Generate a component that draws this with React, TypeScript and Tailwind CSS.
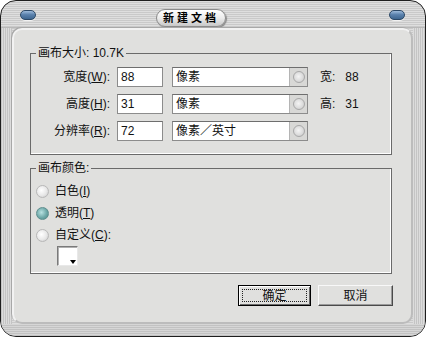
import type { ReactNode } from 'react';

const rows = [
  { label: '宽度', key: 'W', value: '88', unit: '像素', info: '宽:', infoVal: '88' },
  { label: '高度', key: 'H', value: '31', unit: '像素', info: '高:', infoVal: '31' },
  { label: '分辨率', key: 'R', value: '72', unit: '像素／英寸', info: '', infoVal: '' },
];

function Oval() {
  return (
    <div className="w-[16px] h-[10px] rounded-full border border-[#2c4866] bg-[linear-gradient(180deg,#9fbcdc_0%,#5b82ad_45%,#3e6690_100%)] shadow-[0_1px_0_#f2f2f2]" />
  );
}

function SelectBox({ text }: { text: string }) {
  return (
    <div className="ml-[9px] flex h-[20px] w-[136px] border border-[#8c8c8c] border-t-[#6e6e6e] bg-white">
      <div className="flex flex-1 items-center pl-[3px] text-[12px] text-[#111]">{text}</div>
      <div className="flex w-[18px] items-center justify-center border-l border-[#b4b4b4] bg-[#d8d8d6]">
        <div className="h-[12px] w-[12px] rounded-full border border-[#a8a8a8] bg-[radial-gradient(circle_at_45%_45%,#f4f4f4_0%,#dcdcdc_55%,#c4c4c4_100%)]" />
      </div>
    </div>
  );
}

function Radio({ checked, children }: { checked?: boolean; children: ReactNode }) {
  return (
    <div className="ml-[5px] flex h-[22px] items-center gap-[6px]">
      {checked ? (
        <div className="h-[13px] w-[13px] rounded-full border border-[#5e8e8e] bg-[radial-gradient(circle_at_40%_40%,#b8e2e2_0%,#6fa9a9_55%,#4a8585_100%)]" />
      ) : (
        <div className="h-[13px] w-[13px] rounded-full border border-[#b8b8b8] bg-[radial-gradient(circle_at_40%_40%,#ffffff_0%,#e8e8e8_55%,#c4c4c4_100%)]" />
      )}
      <span className="text-[12px] text-[#111]">{children}</span>
    </div>
  );
}

export default function App() {
  return (
    <div className="h-[337px] w-[426px] overflow-hidden rounded-[16px] border border-[#1e1e1e] bg-[repeating-linear-gradient(180deg,#dedede_0px,#dedede_1px,#c9c9c9_1px,#c9c9c9_2px)] font-['Liberation_Sans','Noto_Sans_CJK_SC',sans-serif] text-[#111]">
      <div className="flex h-[26px] flex-col">
        {/* Title bar */}
        <div className="flex flex-1 items-start pt-[8px]">
          <div className="ml-[19px] mt-[1px]">
            <Oval />
          </div>
          <div className="ml-[120px] flex h-[18px] w-[70px] items-center justify-center rounded-full border border-[#8a8a8a] bg-[linear-gradient(180deg,#ffffff_0%,#ececec_50%,#c8c8c8_100%)] shadow-[1px_1px_1px_#8a8a8a]">
            <span className="text-[11px] font-bold tracking-[3px] text-black">新建文档</span>
          </div>
          <div className="flex-1" />
          <div className="mr-[20px] mt-[1px]">
            <Oval />
          </div>
        </div>
      </div>
      <div className="h-[1px] bg-[#b8b8b8]" />

      <div className="flex h-[296px]">
        <div className="w-[11px] bg-[repeating-linear-gradient(90deg,#c4c4c4_0px,#c4c4c4_1px,#dcdcdc_1px,#dcdcdc_2px)]" />
        {/* Panel */}
        <div className="flex flex-1 flex-col rounded-[10px] border-2 border-[#f2f2f2] border-b-[#bcbcbc] border-r-[#bcbcbc] bg-[#e0e0de] pl-[16px] pr-[19px] pt-[16px] shadow-[-1px_-1px_0_#a8a8a8]">
          <fieldset className="border border-[#6a6a6a] shadow-[inset_-1px_-1px_0_#ffffff] pb-[13px]">
            <legend className="ml-[5px] px-[2px] text-[12px] leading-[14px]">画布大小: 10.7K</legend>
            <div className="flex flex-col gap-[7px] pt-[7px]">
              {rows.map((r) => (
                <div key={r.key} className="flex h-[20px] items-center">
                  <div className="w-[79px] whitespace-nowrap text-right text-[12px]">
                    {r.label}(<u>{r.key}</u>):
                  </div>
                  <div className="ml-[7px] flex h-[20px] w-[46px] items-center border border-[#8c8c8c] border-t-[#6e6e6e] bg-white pl-[3px] text-[12px]">
                    {r.value}
                  </div>
                  <SelectBox text={r.unit} />
                  {r.info && (
                    <div className="ml-[12px] flex gap-[10px] text-[12px]">
                      <span>{r.info}</span>
                      <span>{r.infoVal}</span>
                    </div>
                  )}
                </div>
              ))}
            </div>
          </fieldset>

          <fieldset className="mt-[6px] border border-[#6a6a6a] shadow-[inset_-1px_-1px_0_#ffffff] pb-[7px]">
            <legend className="ml-[5px] px-[2px] text-[12px] leading-[14px]">画布颜色:</legend>
            <div className="flex flex-col pt-[5px]">
              <Radio>
                白色(<u>I</u>)
              </Radio>
              <Radio checked>
                透明(<u>T</u>)
              </Radio>
              <Radio>
                自定义(<u>C</u>):
              </Radio>
              <div className="relative ml-[26px] h-[20px] w-[21px] border border-[#7a7a7a] border-b-[#e8e8e8] border-r-[#e8e8e8] bg-white shadow-[inset_1px_1px_0_#b0b0b0]">
                <div className="absolute bottom-[1px] right-[1px] h-0 w-0 border-l-[3px] border-r-[3px] border-t-[4px] border-l-transparent border-r-transparent border-t-black" />
              </div>
            </div>
          </fieldset>

          <div className="mr-[-1px] mt-[11px] flex justify-end gap-[7px]">
            <button className="flex h-[21px] w-[73px] items-center justify-center border border-black bg-[#e0e0de] p-[3px] shadow-[inset_1px_1px_0_#ffffff,inset_-1px_-1px_0_#6a6a6a]">
              <span className="flex h-full w-full items-center justify-center border border-dotted border-[#222] text-[12px]">
                确定
              </span>
            </button>
            <button className="flex h-[21px] w-[75px] items-center justify-center border border-[#f8f8f8] border-b-[#4a4a4a] border-r-[#4a4a4a] bg-[#e0e0de] text-[12px] shadow-[inset_-1px_-1px_0_#9a9a9a]">
              取消
            </button>
          </div>
        </div>
        <div className="w-[12px] bg-[repeating-linear-gradient(90deg,#dcdcdc_0px,#dcdcdc_1px,#c4c4c4_1px,#c4c4c4_2px)]" />
      </div>
      <div className="h-[12px] bg-[repeating-linear-gradient(180deg,#d6d6d6_0px,#d6d6d6_1px,#c2c2c2_1px,#c2c2c2_2px)]" />
    </div>
  );
}
